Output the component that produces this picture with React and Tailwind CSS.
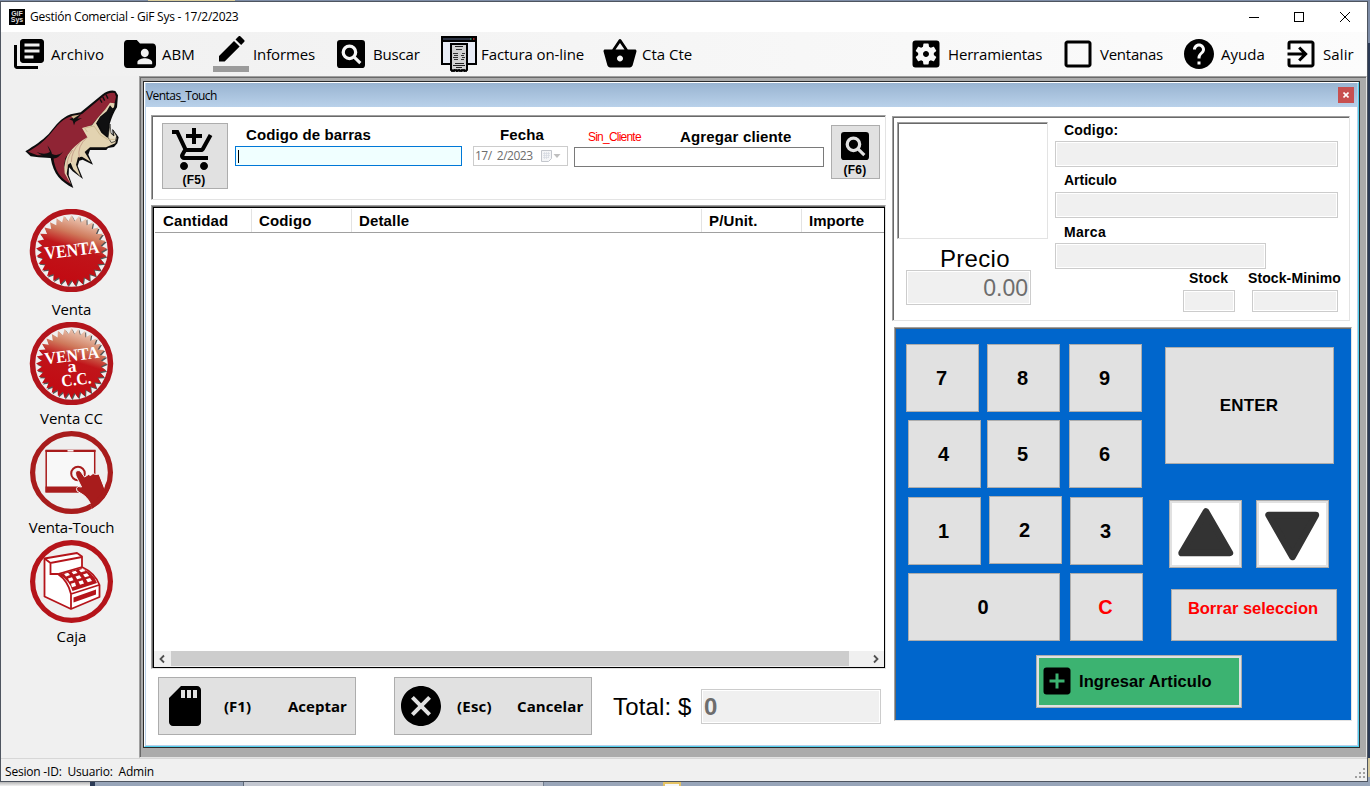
import React from "react";
import {
  MdLibraryBooks,
  MdShoppingBasket,
  MdSettingsApplications,
  MdCheckBoxOutlineBlank,
  MdHelp,
  MdExitToApp,
  MdAddShoppingCart,
  MdCancel,
  MdAddBox,
} from "react-icons/md";

const SUNKEN =
  "border border-t-[#a0a0a0] border-l-[#a0a0a0] border-r-[#e3e3e3] border-b-[#e3e3e3] shadow-[inset_1px_1px_0_#696969]";
const SEGOE = "font-['Open_Sans',sans-serif]";
const BUTTON = "border border-[#adadad] bg-[#e1e1e1]";
const KEY = `${BUTTON} h-[68px] shrink-0 pr-[2px] text-[20px] leading-[66px] font-bold text-center`;
const READONLY = "border border-[#cccccc] bg-[#f0f0f0] shadow-[inset_0_0_0_1px_#fff]";

/* ---------- icons ---------- */

function SearchBox({ className, hole }) {
  return (
    <svg viewBox="3 3 18 18" className={className}>
      <rect x="3" y="3" width="18" height="18" rx="2" fill="#000" />
      <circle cx="11" cy="10.9" r="4" fill="none" stroke={hole} strokeWidth="2.1" />
      <path d="M13.9 13.8 18 17.9" stroke={hole} strokeWidth="2" />
    </svg>
  );
}

function FolderUser() {
  return (
    <svg viewBox="2 4 20 16" preserveAspectRatio="none" className="h-7 w-8">
      <path d="M20 6h-8l-2-2H4c-1.100 0-2 .9-2 2v12c0 1.100.9 2 2 2h16c1.100 0 2-.9 2-2V8c0-1.100-.9-2-2-2zm-5 3c1.350 0 2.500 1.100 2.500 2.400S16.350 13.800 15 13.800s-2.500-1.100-2.500-2.400S13.650 9 15 9zm4.600 8.800h-9.200v-1.200c0-1.350 3.100-2.200 4.600-2.200s4.600.85 4.600 2.200v1.200z" />
    </svg>
  );
}

function PencilBar() {
  return (
    <svg viewBox="0 0 24 24" className="size-9">
      <path d="M17.750 7 14 3.250l-10 10V17h3.750l10-10zm2.960-2.960a.996.996 0 0 0 0-1.410L18.370.290a.996.996 0 0 0-1.410 0L15 2.250 18.750 6l1.960-1.960z" />
      <path d="M0 20h24v4H0z" fill="#9b9b9b" />
    </svg>
  );
}

function InvoiceIcon() {
  return (
    <svg viewBox="0 0 36 36" className="size-9">
      <rect x="1" y="1" width="34" height="27" fill="#e8ecf6" stroke="#000" strokeWidth="2" />
      <rect x="1" y="1" width="34" height="5" fill="#000" />
      <path d="M2 3h27" stroke="#3a4358" strokeWidth="1.500" />
      <path d="M29 3h1.500" stroke="#3a8" strokeWidth="1.500" />
      <path d="M32 3h1.500" stroke="#c33" strokeWidth="1.500" />
      <path d="M10 8h16v26l-2 1-2-1-2 1-2-1-2 1-2-1-2 1-2-1z" fill="#d2d2d2" stroke="#000" strokeWidth="2" />
      <path d="M14 10.500h8M14 27.500h9M12 29.500h12M15 31.500h6" stroke="#222" strokeWidth="1" />
      <path d="M12 17.500h5M13 19.500h4M12 21.500h5M13 23.500h4M21 17.500h3M20 19.500h3M21 21.500h3M20 23.500h3M15 13.500h6" stroke="#333" strokeWidth="1" />
      <path d="M10 34.500h16" stroke="#000" strokeWidth="2.500" strokeDasharray="1.500 1" />
    </svg>
  );
}

function CoyoteLogo() {
  return (
    <svg viewBox="66 264 300 306" className="h-[102px] w-[100px]">
      <path
        d="M76 454C104 436 124 424 146 402C168 376 182 354 212 343L242 337L306 284Q328 268 346 273L354 286L351 322Q338 342 329 372L328 396L338 402L337 386L349 402L356 412L352 430L342 441L324 444L319 450L270 450L265 464L279 494L248 479L238 482L233 498L249 537L218 514L207 502L206 526L220 564C184 546 160 524 152 474L116 472L92 469Z"
        fill="#0c0c0d"
      />
      <path
        d="M84 455C112 440 132 424 150 403C172 376 188 354 218 348L246 342L308 290Q326 276 344 279L348 290L344 308L318 326L296 350L276 374L254 386L262 412L242 428L216 448L196 474L192 500L212 552C180 534 164 512 160 470L178 466L156 466L112 466Z"
        fill="#8f2434"
      />
      <path
        d="M330 308L344 310L342 322L328 332L314 352L302 352L288 370L304 398L320 412L334 414L350 413L346 430L318 442L270 442L254 456L272 486L246 470L234 472L228 494L242 530L220 508L212 488L204 494L200 522L214 555L194 520Q188 478 216 448Q240 424 262 412L246 384L276 376L296 350L316 328Z"
        fill="#e3d3b1"
      />
      <path d="M330 316L320 334L300 350L291 366L306 390L320 410L328 406L324 386L329 352L340 328Z" fill="#101011" />
      <path d="M330 372L333 400L342 408L339 390L350 408L346 424L334 428L324 412Z" fill="#e9dfc6" stroke="#101011" strokeWidth="2" />
      <path d="M110 456Q134 466 150 456L142 436Q154 452 156 462Q176 470 190 454Q170 484 150 472Q130 472 110 456Z" fill="#101011" />
      <path d="M208 358L244 342L232 356L246 354L226 366L222 376L218 362Z" fill="#101011" />
      <path d="M214 348L238 344L220 356Z" fill="#cbb98e" />
      <path d="M300 298L306 308M308 290L314 302M318 284L324 296" stroke="#101011" strokeWidth="4" />
      <path d="M262 412Q230 438 238 474M240 428Q214 454 214 486M218 450Q198 476 202 506" fill="none" stroke="#b98a7c" strokeWidth="2" />
      <path d="M262 396L254 384L282 378L300 404L322 418L344 418" fill="none" stroke="#cdbb93" strokeWidth="3" />
    </svg>
  );
}

function Seal({ lines, id, teeth }) {
  const pts = [];
  for (let i = 0; i < teeth * 2; i++) {
    const r = i % 2 ? 29.5 : 35.5;
    const a = (Math.PI * i) / teeth;
    pts.push(`${(42.500 + r * Math.sin(a)).toFixed(2)},${(41.500 - r * Math.cos(a)).toFixed(2)}`);
  }
  return (
    <svg viewBox="0 0 85 83" className="h-[83px] w-[85px] shrink-0">
      <defs>
        <linearGradient id={id} x1="0.7" y1="0" x2="0.4" y2="0.95">
          <stop offset="0" stopColor="#f3dccb" />
          <stop offset="0.3" stopColor="#cf7a5c" />
          <stop offset="0.5" stopColor="#c0151a" />
          <stop offset="1" stopColor="#c20a12" />
        </linearGradient>
      </defs>
      <circle cx="42.500" cy="41.500" r="39" fill="#efefef" stroke="#b3151c" strokeWidth="5.500" />
      <polygon points={pts.join(" ")} transform="translate(1 1.2)" fill="#555" />
      <polygon points={pts.join(" ")} fill={`url(#${id})`} />
      {lines.map((l) => (
        <text
          key={l.t}
          x={l.x}
          y={l.y}
          transform={`rotate(-7 ${l.x} ${l.y})`}
          textAnchor="middle"
          fill="#fff"
          fontFamily="Liberation Serif, serif"
          fontWeight="700"
          fontSize={l.s}
          textLength={l.w}
          lengthAdjust="spacingAndGlyphs"
        >
          {l.t}
        </text>
      ))}
    </svg>
  );
}

function TouchIcon() {
  return (
    <svg viewBox="0 0 85 83" className="h-[83px] w-[85px] shrink-0">
      <circle cx="42.500" cy="41.500" r="38.900" fill="#efefef" stroke="#a81c1c" strokeWidth="5.200" />
      <rect x="17.200" y="19.700" width="48.500" height="41" fill="#f8f8f8" stroke="#a81c1c" strokeWidth="1.500" />
      <path d="M16.500 18.800h50v2.200h-50zM16.500 55.500h50v6h-50z" fill="#a81c1c" />
      <path d="M38.500 19.800h6" stroke="#fff" strokeWidth="1.500" />
      <circle cx="49" cy="42.500" r="6.800" fill="none" stroke="#a81c1c" strokeWidth="2" />
      <path
        d="M46.500 42Q46.500 39.500 49 39.500Q51 39.500 52 41L55.500 46L59.500 43.500L61.500 44.500L64 42.500L66.500 43.500L70 43L77 61Q71 73 63 76.500Q60 68 54.500 64L48 60Q46.500 57 49 55.500L52.500 56L47 45Z"
        fill="#a81c1c"
        stroke="#f8f8f8"
        strokeWidth="1"
      />
      <path d="M79.600 52Q76 68 62 75.500" fill="none" stroke="#a81c1c" strokeWidth="5" />
    </svg>
  );
}

function RegisterIcon() {
  return (
    <svg viewBox="0 0 85 83" className="h-[83px] w-[85px] shrink-0">
      <circle cx="42.500" cy="41.500" r="38.900" fill="#efefef" stroke="#b5141a" strokeWidth="5.200" />
      <path
        d="M15.500 18.500L48 13L53 16.500V27Q66 33 70.500 45V57L42 69L15.500 56.500Z"
        fill="#fff"
        stroke="#b5141a"
        strokeWidth="1.800"
        strokeLinejoin="round"
      />
      <path d="M15.500 18.500L21.500 23L53 17M21.500 23V34L29 34L53 27M29 34Q39 41 42 54V69M42 54L70 45" fill="none" stroke="#b5141a" strokeWidth="1.800" />
      <path d="M30 34.500L52 28Q65 33 68 43L43.500 51Q41 41 30 34.500Z" fill="#b5141a" />
      <path d="M44.500 57.500L67 49.500V54.500L44.500 62.500Z" fill="#b5141a" />
      <g fill="#fff">
        <path d="M35 34l4-1.200 2 2.300-4 1.300zM42.500 32l4-1.200 2 2.300-4 1.200zM50 30l4-1.200 2.500 2.300-4.500 1.200zM39 38.500l4-1.200 1.500 3-4 1.200zM46.500 36.500l4-1.200 2 2.800-4.300 1.200zM54 34.500l4-1.200 2.200 2.600-4.200 1.300zM42 43.800l4-1.200 1 3.400-4 1.200zM49.500 41.500l4-1.200 1.500 3.200-4 1.300zM57 39.200l4-1.200 2 3-4.200 1.300z" />
      </g>
    </svg>
  );
}

function SdCard() {
  return (
    <svg viewBox="4 2 16 20" className="h-10 w-8">
      <path
        fillRule="evenodd"
        d="M18 2h-8L4 8v12c0 1.100.9 2 2 2h12c1.100 0 2-.9 2-2V4c0-1.100-.9-2-2-2zM10 4v4h2V4zM13 4v4h2V4zM16 4v4h2V4z"
      />
    </svg>
  );
}

function Triangle({ down }) {
  return (
    <svg viewBox="0 0 73 68" className="h-full w-full">
      <path
        d={down ? "M12 14.500H60.500L36.500 57.500Z" : "M37 11L61.500 53.500H12Z"}
        fill="#333"
        stroke="#333"
        strokeWidth="7"
        strokeLinejoin="round"
      />
    </svg>
  );
}

/* ---------- pieces ---------- */

function ToolItem({ icon, label, slot, gap, tracking = "" }) {
  return (
    <div className={`flex items-center ${gap}`}>
      <div className={`flex shrink-0 items-center ${slot}`}>{icon}</div>
      <span className={`whitespace-nowrap ${tracking}`}>{label}</span>
    </div>
  );
}

function SideItem({ icon, label, size = "h-[109px]", pad = "pt-px", tracking = "" }) {
  return (
    <div className={`flex shrink-0 flex-col items-center ${size}`}>
      {icon}
      <span className={`shrink-0 text-[15px] leading-[24px] ${pad} ${tracking}`}>{label}</span>
    </div>
  );
}

function Toolbar() {
  return (
    <div className={`flex h-11 shrink-0 items-center bg-linear-to-r from-[#f0f0f0] to-[#fcfcfc] text-[15px] ${SEGOE}`}>
      <ToolItem gap="ml-[10px] w-[113px]" slot="w-[40px]" tracking="tracking-[0.1px]" icon={<MdLibraryBooks className="size-9" />} label="Archivo" />
      <ToolItem gap="w-[89px]" slot="w-[38px]" icon={<FolderUser />} label="ABM" />
      <ToolItem gap="w-[124px]" slot="w-[40px]" tracking="tracking-[-0.12px]" icon={<PencilBar />} label="Informes" />
      <ToolItem gap="w-[104px]" slot="w-[36px]" tracking="tracking-[-0.15px]" icon={<SearchBox className="size-[28px]" hole="#f5f5f5" />} label="Buscar" />
      <ToolItem gap="w-[161px]" slot="w-[40px]" tracking="tracking-[-0.08px]" icon={<InvoiceIcon />} label="Factura on-line" />
      <ToolItem gap="" slot="w-[40px]" icon={<MdShoppingBasket className="size-9" />} label="Cta Cte" />
      <div className="flex-1" />
      <ToolItem gap="w-[152px]" slot="w-[40px]" tracking="tracking-[-0.17px]" icon={<MdSettingsApplications className="size-9" />} label="Herramientas" />
      <ToolItem gap="w-[121px]" slot="w-[40px]" tracking="tracking-[-0.25px]" icon={<MdCheckBoxOutlineBlank className="size-9" />} label="Ventanas" />
      <ToolItem gap="w-[102px]" slot="w-[40px]" icon={<MdHelp className="size-9" />} label="Ayuda" />
      <ToolItem gap="w-[84px]" slot="w-[40px]" tracking="tracking-[0.1px]" icon={<MdExitToApp className="size-9" />} label="Salir" />
    </div>
  );
}

function TitleBar() {
  return (
    <div className="flex h-[30px] shrink-0 items-center bg-white">
      <div className="ml-2 flex size-4 flex-col items-center justify-center bg-black text-[7px] leading-[6px] font-bold text-[#ddd]">
        <span>GiF</span>
        <span>Sys</span>
      </div>
      <span className={`ml-[5px] flex-1 text-[12px] tracking-[-0.26px] ${SEGOE}`}>Gestión Comercial - GiF Sys - 17/2/2023</span>
      <svg viewBox="0 0 102 10" className="mr-[16px] h-[10px] w-[102px]" fill="none" stroke="#000" shapeRendering="crispEdges">
        <path d="M0 5.500H10" />
        <rect x="45.500" y="0.500" width="9" height="9" />
        <path d="M91 0l10 10M101 0l-10 10" shapeRendering="auto" />
      </svg>
    </div>
  );
}

function SearchPanel() {
  return (
    <div className={`flex h-[85px] w-[735px] ${SUNKEN}`}>
      <div className={`mt-[7px] ml-[10px] flex size-[66px] flex-col items-center pt-[2px] pr-[2px] ${BUTTON}`}>
        <MdAddShoppingCart className="size-[48px] shrink-0" />
        <span className="-mt-px text-[12px] leading-[15px] font-bold tracking-[0.3px]">(F5)</span>
      </div>
      <div className="ml-[7px] w-[227px]">
        <div className="h-[30px] pt-[10px] pl-[11px] text-[15px] leading-[18px] font-bold tracking-[0.1px] whitespace-nowrap">Codigo de barras</div>
        <div className="flex h-5 items-center border border-[#0078d7] bg-[#f0ffff] pl-[2px]">
          <div className="h-[13px] w-px bg-black" />
        </div>
      </div>
      <div className="ml-[11px] w-[95px]">
        <div className="h-[30px] pt-[10px] pl-[27px] text-[15px] leading-[18px] font-bold tracking-[0.1px]">Fecha</div>
        <div className={`flex h-5 items-center border border-[#cccccc] pl-[1px] text-[12px] tracking-[-0.5px] whitespace-pre text-[#6d6d6d] ${SEGOE}`}>
          <span className="w-[66px]">17/  2/2023</span>
          <svg viewBox="0 0 26 12" className="h-3 w-[26px] shrink-0">
            <path d="M.5.5h10v8l-3 3h-7z" fill="#f4f5f7" stroke="#c3c6cc" />
            <path d="M2 3.500h7M2 5.500h7M2 7.500h6M3.500 2v7M5.500 2v7M7.500 2v6" stroke="#d6dae1" strokeWidth=".7" />
            <path d="M12.500 4h7l-3.500 4z" fill="#bfbfbf" />
          </svg>
        </div>
      </div>
      <div className="ml-[6px] w-[250px]">
        <div className="flex h-[31px] items-start pt-[12px] pl-[14px]">
          <span className="w-[92px] text-[12px] leading-[18px] tracking-[-0.78px] text-[#ff0000]">Sin_Cliente</span>
          <span className="text-[15px] leading-[18px] font-bold tracking-[0.15px] whitespace-nowrap">Agregar cliente</span>
        </div>
        <div className="h-5 border border-[#7a7a7a] bg-white" />
      </div>
      <div className={`mt-[9px] ml-[7px] flex h-[54px] w-[49px] flex-col items-center pr-px ${BUTTON}`}>
        <SearchBox className="mt-[6px] size-[28px] shrink-0" hole="#e1e1e1" />
        <span className="mt-[3px] text-[12px] leading-[15px] font-bold tracking-[0.3px]">(F6)</span>
      </div>
    </div>
  );
}

function ItemsGrid() {
  return (
    <div className={`mt-[5px] h-[464px] w-[735px] pt-px pl-px ${SUNKEN}`}>
      <div className="flex h-full w-full flex-col border border-black bg-white">
        <div className="ml-px flex h-[25px] shrink-0 border-b border-[#a0a0a0] pt-[1px] text-[15px] leading-[24px] font-bold tracking-[0.15px]">
          <div className="w-[97px] border-r border-[#e3e3e3] pl-2">Cantidad</div>
          <div className="w-[100px] border-r border-[#e3e3e3] pl-[7px]">Codigo</div>
          <div className="w-[350px] border-r border-[#e3e3e3] pl-[7px]">Detalle</div>
          <div className="w-[100px] border-r border-[#e3e3e3] pl-[7px]">P/Unit.</div>
          <div className="pl-[7px] tracking-normal">Importe</div>
        </div>
        <div className="flex-1" />
        <div className="flex h-[16px] shrink-0 items-stretch bg-[#f0f0f0]">
          <svg viewBox="0 0 17 16" className="h-4 w-[17px]">
            <path d="M10 4.500 6.500 8l3.500 3.500" fill="none" stroke="#505050" strokeWidth="1.800" />
          </svg>
          <div className="mb-px w-[678px] bg-[#cdcdcd]" />
          <div className="flex-1" />
          <svg viewBox="0 0 17 16" className="h-4 w-[17px]">
            <path d="M7 4.500 10.500 8 7 11.500" fill="none" stroke="#505050" strokeWidth="1.800" />
          </svg>
        </div>
      </div>
    </div>
  );
}

function ActionBar() {
  return (
    <div className="mt-[8px] flex h-[58px]">
      <div className={`ml-[7px] flex w-[198px] items-center pl-[10px] text-[15px] font-bold ${BUTTON} ${SEGOE}`}>
        <SdCard />
        <span className="ml-[23px] w-[64px]">(F1)</span>
        <span>Aceptar</span>
      </div>
      <div className={`ml-[38px] flex w-[198px] items-center pl-[2px] text-[15px] font-bold ${BUTTON} ${SEGOE}`}>
        <MdCancel className="size-12 shrink-0" />
        <span className="ml-[12px] w-[60px] tracking-[0.2px]">(Esc)</span>
        <span className="tracking-[0.1px]">Cancelar</span>
      </div>
      <span className="ml-[21px] w-[88px] pt-[14px] text-[24px] leading-[32px] tracking-[0.15px]">Total: $</span>
      <div className={`mt-[12px] h-[35px] w-[180px] pl-[2px] text-[24px] leading-[34px] font-bold text-[#6d6d6d] ${READONLY}`}>0</div>
    </div>
  );
}

function ArticlePanel() {
  return (
    <div className={`flex h-[205px] w-[458px] text-[14px] font-bold ${SUNKEN}`}>
      <div className="w-[162px] shrink-0 pt-[5px] pl-[4px]">
        <div className={`h-[117px] w-[151px] ${SUNKEN}`} />
        <div className="h-[31px] pt-[8px] pl-[43px] text-[24px] leading-[24px] font-normal tracking-[0.3px]">Precio</div>
        <div className={`ml-[9px] h-[35px] w-[125px] pr-[2px] text-right text-[23px] leading-[34px] font-normal text-[#6d6d6d] ${READONLY}`}>0.00</div>
      </div>
      <div className="w-[290px] shrink-0 pt-[2px]">
        <div className="h-[22px] pl-[9px] leading-[22px] tracking-[0.2px]">Codigo:</div>
        <div className={`h-[26px] w-[283px] ${READONLY}`} />
        <div className="h-[25px] pl-[9px] leading-[27px]">Articulo</div>
        <div className={`h-[26px] w-[283px] ${READONLY}`} />
        <div className="h-[25px] pl-[9px] leading-[28px] tracking-[0.3px]">Marca</div>
        <div className={`h-[26px] w-[211px] ${READONLY}`} />
        <div className="flex h-[21px] leading-[19px]">
          <span className="ml-[134px] w-[59px] tracking-[0.2px]">Stock</span>
          <span className="tracking-[0.1px] whitespace-nowrap">Stock-Minimo</span>
        </div>
        <div className="flex">
          <div className={`ml-[128px] h-[22px] w-[52px] ${READONLY}`} />
          <div className={`ml-[17px] h-[22px] w-[86px] ${READONLY}`} />
        </div>
      </div>
    </div>
  );
}

function Keypad() {
  return (
    <div className={`mt-[6px] ml-[2px] h-[394px] w-[458px] bg-[#0066cc] ${SUNKEN}`}>
      <div className="flex">
        <div className="w-[248px] shrink-0 pt-[16px]">
          <div className="ml-[11px] flex">
            <div className={`w-[73px] ${KEY}`}>7</div>
            <div className={`ml-[8px] w-[73px] ${KEY}`}>8</div>
            <div className={`ml-[9px] w-[73px] ${KEY}`}>9</div>
          </div>
          <div className="mt-[8px] ml-[13px] flex">
            <div className={`w-[73px] ${KEY}`}>4</div>
            <div className={`ml-[6px] w-[73px] ${KEY}`}>5</div>
            <div className={`ml-[9px] w-[73px] ${KEY}`}>6</div>
          </div>
          <div className="mt-[9px] ml-[13px] flex h-[68px]">
            <div className={`w-[73px] ${KEY}`}>1</div>
            <div className={`-mt-px ml-[8px] w-[73px] ${KEY}`}>2</div>
            <div className={`ml-[8px] w-[73px] ${KEY}`}>3</div>
          </div>
          <div className="mt-[8px] ml-[13px] flex">
            <div className={`w-[152px] ${KEY}`}>0</div>
            <div className={`ml-[10px] w-[73px] text-[#ff0000] ${KEY}`}>C</div>
          </div>
        </div>
        <div className="flex-1 pt-[19px]">
          <div className={`ml-[22px] h-[117px] w-[169px] pr-px text-center text-[17px] leading-[115px] font-bold tracking-[0.2px] ${BUTTON}`}>ENTER</div>
          <div className="mt-[36px] ml-[26px] flex gap-[14px]">
            <div className="h-[68px] w-[73px] border border-[#adadad] bg-white shadow-[inset_0_0_0_2px_#e1e1e1]">
              <Triangle />
            </div>
            <div className="h-[68px] w-[73px] border border-[#adadad] bg-white shadow-[inset_0_0_0_2px_#e1e1e1]">
              <Triangle down />
            </div>
          </div>
          <div className={`mt-[21px] ml-[28px] h-[52px] w-[166px] pt-[5px] pr-[2px] text-center text-[16.5px] leading-[26px] font-bold whitespace-nowrap text-[#ff0000] ${BUTTON}`}>Borrar seleccion</div>
        </div>
      </div>
      <div className="mt-[14px] ml-[141px] flex h-[53px] w-[206px] items-center border border-[#adadad] bg-[#3cb371] pl-[2px] text-[16.5px] font-bold shadow-[inset_0_0_0_2px_#e1e1e1]">
        <MdAddBox className="mb-px size-9 shrink-0" />
        <span className="ml-[4px] tracking-[0.08px] whitespace-nowrap">Ingresar Articulo</span>
      </div>
    </div>
  );
}

function SalesWindow() {
  return (
    <div className="mt-[3px] ml-[2px] flex h-[667px] w-[1217px] flex-col border border-[#2b2b2b] bg-white">
      <div className="flex flex-1 flex-col border border-t-white border-r-[#52d0ee] border-b-[#52d0ee] border-l-white">
        <div className="flex flex-1 flex-col border-r border-b border-l border-[#b9d1ea]">
          <div className="flex h-6 shrink-0 items-center bg-linear-to-b from-[#99b4d1] to-[#b9d1ea]">
            <span className={`flex-1 pt-[2px] text-[12px] tracking-[-0.55px] ${SEGOE}`}>Ventas_Touch</span>
            <div className="mr-[3px] flex size-4 items-center justify-center bg-[#c75050]">
              <svg viewBox="0 0 6 6" className="size-[6px]">
                <path d="M.5.5l5 5M5.500.5l-5 5" stroke="#fff" strokeWidth="1.600" />
              </svg>
            </div>
          </div>
          <div className="flex flex-1">
            <div className="ml-[5px] w-[735px] shrink-0 pt-2">
              <SearchPanel />
              <ItemsGrid />
              <ActionBar />
            </div>
            <div className="ml-[6px] w-[461px] shrink-0 pt-[9px]">
              <ArticlePanel />
              <Keypad />
            </div>
          </div>
        </div>
      </div>
    </div>
  );
}

function Sidebar() {
  return (
    <div className={`flex w-[138px] shrink-0 flex-col ${SEGOE}`}>
      <div className="mt-[12px] ml-[21px] h-[121px]">
        <CoyoteLogo />
      </div>
      <div className="flex w-[141px] flex-col">
        <SideItem
          label="Venta"
          size="h-[113px]"
          pad="pt-[5px]"
          tracking="tracking-[-0.15px]"
          icon={<Seal id="sealA" teeth={29} lines={[{ t: "VENTA", x: 43.5, y: 47, s: 18, w: 55 }]} />}
        />
        <SideItem
          label="Venta CC"
          icon={
            <Seal
              id="sealB"
              teeth={32}
              lines={[
                { t: "VENTA", x: 43.5, y: 39, s: 17, w: 55 },
                { t: "a", x: 43.5, y: 50, s: 17, w: 9 },
                { t: "C.C.", x: 48, y: 63, s: 17, w: 30 },
              ]}
            />
          }
        />
        <SideItem label="Venta-Touch" tracking="tracking-[-0.22px]" icon={<TouchIcon />} />
        <SideItem label="Caja" icon={<RegisterIcon />} />
      </div>
    </div>
  );
}

function Grip() {
  return (
    <svg viewBox="0 0 11 11" className="mr-[1px] mb-[2px] size-[11px] self-end" fill="#a0a0a0">
      <path d="M8 0h2v2H8zM8 4h2v2H8zM4 4h2v2H4zM8 8h2v2H8zM4 8h2v2H4zM0 8h2v2H0z" />
    </svg>
  );
}

export default function App() {
  return (
    <div className="flex h-[786px] w-[1370px] flex-col overflow-hidden bg-[#98a5b9] font-['Liberation_Sans',sans-serif] text-black">
      <div className="flex h-px shrink-0 bg-[#7d8ca6]">
        <div className="ml-[148px] h-px w-[87px] bg-[#dccf9c]" />
      </div>
      <div className="flex h-[781px] shrink-0">
        <div className="flex w-[1368px] flex-col border border-[#4e5560] bg-[#f0f0f0]">
          <TitleBar />
          <Toolbar />
          <div className="flex h-[682px] shrink-0">
            <Sidebar />
            <div className={`flex-1 bg-[#ababab] pt-px pl-px ${SUNKEN}`}>
              <SalesWindow />
            </div>
          </div>
          <div className="flex flex-1 items-center border-t border-[#d7d7d7]">
            <span className={`flex-1 pt-[3px] pl-[4px] text-[12px] tracking-[-0.2px] whitespace-pre ${SEGOE}`}>Sesion -ID:  Usuario:  Admin</span>
            <Grip />
          </div>
        </div>
        <div className="flex w-[2px] flex-col">
          <div className="h-[42px] bg-[#7d8ca6]" />
          <div className="flex-1 bg-[#2b3a55]" />
          <div className="h-[19px] bg-[#d4c79a]" />
          <div className="h-[5px] bg-[#98a5b9]" />
        </div>
      </div>
      <div className="flex flex-1">
        <div className="w-[90px] bg-linear-to-b from-[#b4b4b4] to-[#f2f2f2]" />
        <div className="w-[5px] bg-[#2b3a55]" />
        <div className="w-[148px] bg-[#98a5b9]" />
        <div className="w-[300px] border-l border-[#5c6675] bg-[#c4c8d1]" />
        <div className="w-[120px] border-l border-[#707b8c] bg-[#9aa6b9]" />
        <div className="w-[18px] border-2 border-b-0 border-[#e5c365] bg-[#f4f6fa]" />
      </div>
    </div>
  );
}
